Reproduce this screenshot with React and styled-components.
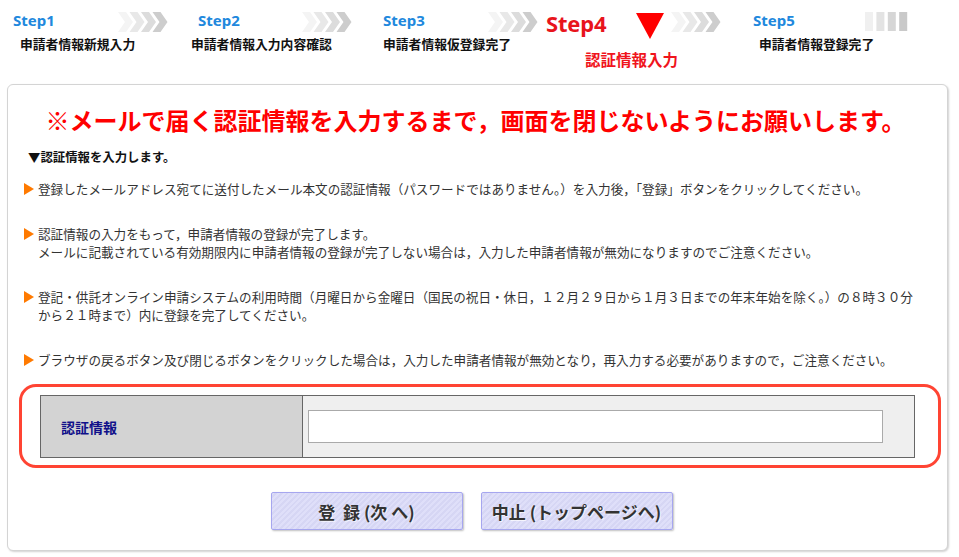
import React from "react";
import styled, { createGlobalStyle } from "styled-components";

const Global = createGlobalStyle`
  html, body { margin: 0; padding: 0; background: #ffffff; }
  body { font-family: "Noto Sans CJK JP", "Noto Sans", sans-serif; color: #333; }
  * { box-sizing: border-box; }
`;

const Page = styled.div`
  width: 959px;
  height: 557px;
  overflow: hidden;
`;

const StepBar = styled.div`
  display: flex;
  height: 84px;
`;

const StepBlock = styled.div`
  width: ${(p) => p.$w}px;
  display: flex;
  flex-direction: column;
`;

const StepTop = styled.div`
  display: flex;
  align-items: flex-start;
  height: 28px;
  margin-top: 10px;
  padding-left: ${(p) => p.$pl}px;
`;

const StepLabel = styled.div`
  font-family: "Noto Sans", "Open Sans", sans-serif;
  font-weight: 700;
  font-size: ${(p) => (p.$current ? 22 : 15)}px;
  line-height: ${(p) => (p.$current ? 26 : 20)}px;
  color: ${(p) => (p.$current ? "#e8141c" : "#2188dd")};
  letter-spacing: ${(p) => (p.$current ? "-0.2px" : "0")};
  margin-right: ${(p) => p.$gap}px;
`;

const Deco = styled.svg`
  display: block;
  margin-top: ${(p) => p.$mt || 0}px;
  margin-right: ${(p) => p.$mr || 0}px;
  flex: none;
`;

const StepCaption = styled.div`
  font-weight: 700;
  font-size: ${(p) => (p.$current ? 15.5 : 12.8)}px;
  line-height: ${(p) => (p.$current ? 18 : 14)}px;
  color: ${(p) => (p.$current ? "#f0141c" : "#111")};
  margin-top: ${(p) => (p.$current ? 12 : -1)}px;
  padding-left: ${(p) => p.$pl}px;
  white-space: nowrap;
`;

const Chevrons = ({ mt }) => {
  const colors = ["#f4f4f4", "#e8e8e8", "#dcdcdc", "#cdcdcd"];
  return (
    <Deco width="50" height="20" viewBox="0 0 50 20" $mt={mt}>
      {colors.map((c, i) => {
        const o = i * 11.5;
        return (
          <polygon
            key={i}
            fill={c}
            points={`${o},0 ${o + 8},0 ${o + 15},10 ${o + 8},20 ${o},20 ${o + 7},10`}
          />
        );
      })}
    </Deco>
  );
};

const Bars = () => {
  const colors = ["#f0f0f0", "#e3e3e3", "#d6d6d6", "#c9c9c9"];
  return (
    <Deco width="43" height="20" viewBox="0 0 43 20" $mt={2}>
      {colors.map((c, i) => (
        <rect key={i} x={i * 11.4} y="0" width="8" height="19" fill={c} />
      ))}
    </Deco>
  );
};

const DownTriangle = () => (
  <Deco width="28" height="26" viewBox="0 0 28 26" $mt={3} $mr={7}>
    <polygon points="0,0 28,0 14,26" fill="#ff0000" />
  </Deco>
);

const Panel = styled.div`
  margin-left: 7px;
  width: 941px;
  height: 467px;
  background: #fff;
  border: 1px solid #d4d4d4;
  border-radius: 6px;
  box-shadow: 1px 1px 2px rgba(0, 0, 0, 0.18);
  padding: 20px 0 0 0;
`;

const Warning = styled.h1`
  margin: 0;
  padding-right: 4px;
  text-align: center;
  font-size: 24px;
  line-height: 30px;
  font-weight: 700;
  color: #ff0000;
  white-space: nowrap;
`;

const SubHeading = styled.div`
  margin: 13px 0 0 20px;
  font-size: 12.4px;
  line-height: 18px;
  font-weight: 700;
  color: #111;
`;

const NoteList = styled.ul`
  list-style: none;
  margin: 14px 0 0 0;
  padding: 0 0 0 16px;
  display: flex;
  flex-direction: column;
  gap: 27px;
`;

const NoteItem = styled.li`
  display: flex;
  align-items: flex-start;
  font-size: 12.6px;
  line-height: 18px;
  color: #333;
  white-space: nowrap;
`;

const Bullet = styled.span`
  flex: none;
  width: 0;
  height: 0;
  margin-top: 3px;
  margin-right: 4px;
  border-top: 6px solid transparent;
  border-bottom: 6px solid transparent;
  border-left: 10px solid #ff7a00;
`;

const Highlight = styled.div`
  margin: 15px 6px 0 11px;
  border: 3px solid #ff4433;
  border-radius: 17px;
  padding: 8px 23px 7px 18px;
`;

const FormTable = styled.div`
  display: grid;
  grid-template-columns: 262px 1fr;
  height: 63px;
  border: 1px solid #666;
`;

const LabelCell = styled.div`
  background: #d3d3d3;
  border-right: 1px solid #666;
  display: flex;
  align-items: center;
  padding-left: 20px;
  font-size: 14px;
  font-weight: 700;
  color: #10108a;
`;

const InputCell = styled.div`
  background: #efefef;
  display: flex;
  align-items: center;
  padding-left: 5px;
`;

const TextInput = styled.input`
  width: 575px;
  height: 33px;
  border: 1px solid #aaa;
  background: #fff;
  outline: none;
  font-size: 14px;
  padding: 0 4px;
`;

const ButtonRow = styled.div`
  margin-top: 24px;
  display: flex;
  justify-content: center;
  gap: 18px;
  padding-right: 12px;
`;

const ActionButton = styled.button`
  width: 192px;
  height: 38px;
  border: 1px solid #a6a6ef;
  border-radius: 2px;
  background: repeating-linear-gradient(
    135deg,
    #dfdff9 0px,
    #dfdff9 2px,
    #d6d6f4 2px,
    #d6d6f4 4px
  );
  box-shadow: 1px 1px 2px rgba(0, 0, 0, 0.25);
  font-family: "Noto Sans CJK JP", "Noto Sans", sans-serif;
  font-size: 17px;
  font-weight: 700;
  color: #333;
  text-shadow: 1px 1px 0 rgba(255, 255, 255, 0.7);
  white-space: pre;
  padding: 0;
  cursor: pointer;
`;

export default function App() {
  return (
    <Page>
      <Global />
      <StepBar>
        <StepBlock $w={185}>
          <StepTop $pl={13}>
            <StepLabel $gap={63}>Step1</StepLabel>
            <Chevrons mt={2} />
          </StepTop>
          <StepCaption $pl={20}>申請者情報新規入力</StepCaption>
        </StepBlock>
        <StepBlock $w={185}>
          <StepTop $pl={13}>
            <StepLabel $gap={62}>Step2</StepLabel>
            <Chevrons mt={2} />
          </StepTop>
          <StepCaption $pl={6}>申請者情報入力内容確認</StepCaption>
        </StepBlock>
        <StepBlock $w={170}>
          <StepTop $pl={13}>
            <StepLabel $gap={63}>Step3</StepLabel>
            <Chevrons mt={2} />
          </StepTop>
          <StepCaption $pl={13}>申請者情報仮登録完了</StepCaption>
        </StepBlock>
        <StepBlock $w={200}>
          <StepTop $pl={6}>
            <StepLabel $current $gap={30}>Step4</StepLabel>
            <DownTriangle />
            <Chevrons mt={2} />
          </StepTop>
          <StepCaption $current $pl={45}>認証情報入力</StepCaption>
        </StepBlock>
        <StepBlock $w={219}>
          <StepTop $pl={13}>
            <StepLabel $gap={70}>Step5</StepLabel>
            <Bars />
          </StepTop>
          <StepCaption $pl={19}>申請者情報登録完了</StepCaption>
        </StepBlock>
      </StepBar>

      <Panel>
        <Warning>※メールで届く認証情報を入力するまで，画面を閉じないようにお願いします。</Warning>
        <SubHeading>▼認証情報を入力します。</SubHeading>
        <NoteList>
          <NoteItem>
            <Bullet />
            <div>
              登録したメールアドレス宛てに送付したメール本文の認証情報（パスワードではありません。）を入力後，「登録」ボタンをクリックしてください。
            </div>
          </NoteItem>
          <NoteItem>
            <Bullet />
            <div>
              認証情報の入力をもって，申請者情報の登録が完了します。
              <br />
              メールに記載されている有効期限内に申請者情報の登録が完了しない場合は，入力した申請者情報が無効になりますのでご注意ください。
            </div>
          </NoteItem>
          <NoteItem>
            <Bullet />
            <div>
              登記・供託オンライン申請システムの利用時間（月曜日から金曜日（国民の祝日・休日，１２月２９日から１月３日までの年末年始を除く。）の８時３０分
              <br />
              から２１時まで）内に登録を完了してください。
            </div>
          </NoteItem>
          <NoteItem>
            <Bullet />
            <div>
              ブラウザの戻るボタン及び閉じるボタンをクリックした場合は，入力した申請者情報が無効となり，再入力する必要がありますので，ご注意ください。
            </div>
          </NoteItem>
        </NoteList>

        <Highlight>
          <FormTable>
            <LabelCell>認証情報</LabelCell>
            <InputCell>
              <TextInput type="text" />
            </InputCell>
          </FormTable>
        </Highlight>

        <ButtonRow>
          <ActionButton type="button">{"登  録 (次 へ)"}</ActionButton>
          <ActionButton type="button">中止 (トップページへ)</ActionButton>
        </ButtonRow>
      </Panel>
    </Page>
  );
}
